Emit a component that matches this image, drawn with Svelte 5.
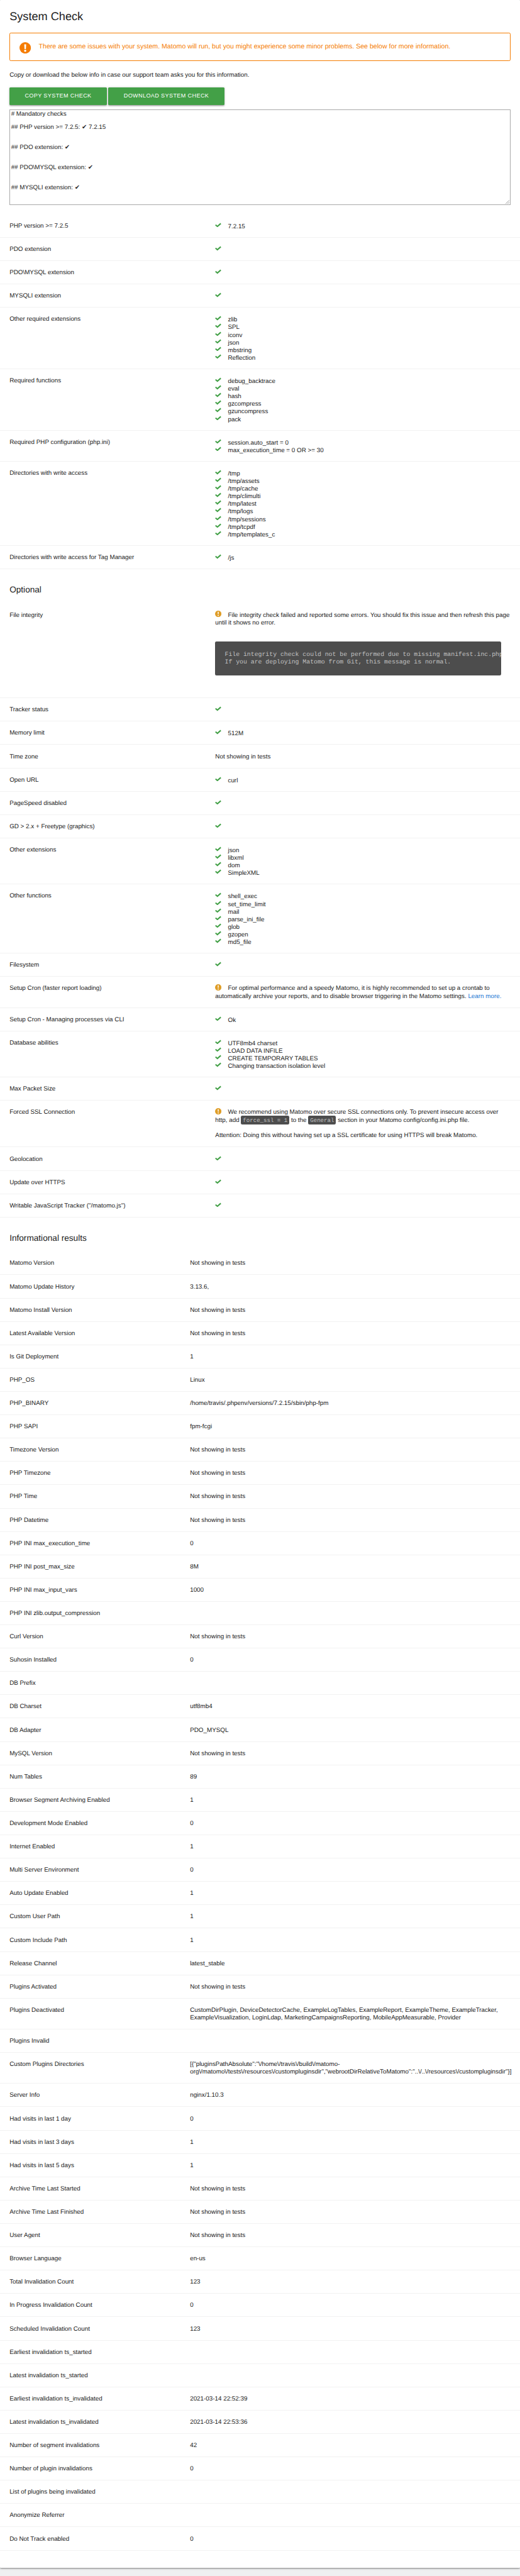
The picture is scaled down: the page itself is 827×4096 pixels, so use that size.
<script>
  const NS = 'Not showing in tests';
  const mandatory = [
    ['PHP version >= 7.2.5', ['7.2.15']],
    ['PDO extension', ['']],
    ['PDO\\MYSQL extension', ['']],
    ['MYSQLI extension', ['']],
    ['Other required extensions', ['zlib', 'SPL', 'iconv', 'json', 'mbstring', 'Reflection']],
    ['Required functions', ['debug_backtrace', 'eval', 'hash', 'gzcompress', 'gzuncompress', 'pack']],
    ['Required PHP configuration (php.ini)', ['session.auto_start = 0', 'max_execution_time = 0 OR >= 30']],
    ['Directories with write access', ['/tmp', '/tmp/assets', '/tmp/cache', '/tmp/climulti', '/tmp/latest', '/tmp/logs', '/tmp/sessions', '/tmp/tcpdf', '/tmp/templates_c']],
    ['Directories with write access for Tag Manager', ['/js']],
  ];
  const optional = [
    ['File integrity', 'integrity', 199],
    ['Tracker status', ['']],
    ['Memory limit', ['512M']],
    ['Time zone', 'plain', 49],
    ['Open URL', ['curl']],
    ['PageSpeed disabled', ['']],
    ['GD > 2.x + Freetype (graphics)', ['']],
    ['Other extensions', ['json', 'libxml', 'dom', 'SimpleXML']],
    ['Other functions', ['shell_exec', 'set_time_limit', 'mail', 'parse_ini_file', 'glob', 'gzopen', 'md5_file']],
    ['Filesystem', ['']],
    ['Setup Cron (faster report loading)', 'cron', 65],
    ['Setup Cron - Managing processes via CLI', ['Ok']],
    ['Database abilities', ['UTF8mb4 charset', 'LOAD DATA INFILE', 'CREATE TEMPORARY TABLES', 'Changing transaction isolation level']],
    ['Max Packet Size', ['']],
    ['Forced SSL Connection', 'ssl', 98],
    ['Geolocation', ['']],
    ['Update over HTTPS', ['']],
    ['Writable JavaScript Tracker ("/matomo.js")', ['']],
  ];
  const info = [
    ['Matomo Version', NS],
    ['Matomo Update History', '3.13.6,'],
    ['Matomo Install Version', NS],
    ['Latest Available Version', NS],
    ['Is Git Deployment', '1'],
    ['PHP_OS', 'Linux'],
    ['PHP_BINARY', '/home/travis/.phpenv/versions/7.2.15/sbin/php-fpm'],
    ['PHP SAPI', 'fpm-fcgi'],
    ['Timezone Version', NS],
    ['PHP Timezone', NS],
    ['PHP Time', NS],
    ['PHP Datetime', NS],
    ['PHP INI max_execution_time', '0'],
    ['PHP INI post_max_size', '8M'],
    ['PHP INI max_input_vars', '1000'],
    ['PHP INI zlib.output_compression', ''],
    ['Curl Version', NS],
    ['Suhosin Installed', '0'],
    ['DB Prefix', ''],
    ['DB Charset', 'utf8mb4'],
    ['DB Adapter', 'PDO_MYSQL'],
    ['MySQL Version', NS],
    ['Num Tables', '89'],
    ['Browser Segment Archiving Enabled', '1'],
    ['Development Mode Enabled', '0'],
    ['Internet Enabled', '1'],
    ['Multi Server Environment', '0'],
    ['Auto Update Enabled', '1'],
    ['Custom User Path', '1'],
    ['Custom Include Path', '1'],
    ['Release Channel', 'latest_stable'],
    ['Plugins Activated', NS],
    ['Plugins Deactivated', 'CustomDirPlugin, DeviceDetectorCache, ExampleLogTables, ExampleReport, ExampleTheme, ExampleTracker,\nExampleVisualization, LoginLdap, MarketingCampaignsReporting, MobileAppMeasurable, Provider'],
    ['Plugins Invalid', ''],
    ['Custom Plugins Directories', '[{"pluginsPathAbsolute":"\\/home\\/travis\\/build\\/matomo-\norg\\/matomo\\/tests\\/resources\\/custompluginsdir","webrootDirRelativeToMatomo":"..\\/..\\/resources\\/custompluginsdir"}]'],
    ['Server Info', 'nginx/1.10.3'],
    ['Had visits in last 1 day', '0'],
    ['Had visits in last 3 days', '1'],
    ['Had visits in last 5 days', '1'],
    ['Archive Time Last Started', NS],
    ['Archive Time Last Finished', NS],
    ['User Agent', NS],
    ['Browser Language', 'en-us'],
    ['Total Invalidation Count', '123'],
    ['In Progress Invalidation Count', '0'],
    ['Scheduled Invalidation Count', '123'],
    ['Earliest invalidation ts_started', ''],
    ['Latest invalidation ts_started', ''],
    ['Earliest invalidation ts_invalidated', '2021-03-14 22:52:39'],
    ['Latest invalidation ts_invalidated', '2021-03-14 22:53:36'],
    ['Number of segment invalidations', '42'],
    ['Number of plugin invalidations', '0'],
    ['List of plugins being invalidated', ''],
    ['Anonymize Referrer', ''],
    ['Do Not Track enabled', '0'],
  ];
  const report = '# Mandatory checks\n\n## PHP version >= 7.2.5: ✔ 7.2.15\n\n\n## PDO extension: ✔\n\n\n## PDO\\MYSQL extension: ✔\n\n\n## MYSQLI extension: ✔';
</script>

{#snippet ok()}
  <svg class="icon" viewBox="0 0 13 10"><path d="M1 4.7 L4.9 8 L12.1 1.8" fill="none" stroke="#43a047" stroke-width="2.7" /></svg>
{/snippet}

{#snippet warn()}
  <svg class="icon warn" viewBox="0 0 14 14"><circle cx="7" cy="7" r="7" fill="#df9d27" /><path d="M5.9 2.4h2.2l-.2 5.6H6.1z" fill="#fff" /><circle cx="7" cy="10.6" r="1.3" fill="#fff" /></svg>
{/snippet}

{#snippet checks(rows)}
  <div class="table">
    {#each rows as [label, value, height]}
      <div class="row" style:height="{height ?? 33 + 16 * value.length}px">
        <div class="label">{label}</div>
        <div class="value">
          {#if value === 'plain'}
            {NS}
          {:else if value === 'integrity'}
            {@render warn()}<span>File integrity check failed and reported some errors. You should fix this issue and then refresh this page<br />until it shows no error.</span>
            <pre>File integrity check could not be performed due to missing manifest.inc.php.
If you are deploying Matomo from Git, this message is normal.</pre>
          {:else if value === 'cron'}
            {@render warn()}<span>For optimal performance and a speedy Matomo, it is highly recommended to set up a crontab to<br />automatically archive your reports, and to disable browser triggering in the Matomo settings. <a href="#learn">Learn more.</a></span>
          {:else if value === 'ssl'}
            {@render warn()}<span>We recommend using Matomo over secure SSL connections only. To prevent insecure access over<br />http, add <code>force_ssl = 1</code> to the <code>General</code> section in your Matomo config/config.ini.php file.</span>
            <p class="attention">Attention: Doing this without having set up a SSL certificate for using HTTPS will break Matomo.</p>
          {:else}
            {#each value as item}
              <div class="item">{@render ok()}<span>{item}</span></div>
            {/each}
          {/if}
        </div>
      </div>
    {/each}
  </div>
{/snippet}

<div class="page">
  <main class="card">
    <h2>System Check</h2>
    <div class="alert">
      <svg viewBox="0 0 24 24"><circle cx="12" cy="12" r="12" fill="#f57c00" /><path d="M10 4.5h4l-.5 10h-3z" fill="#fff" /><circle cx="12" cy="18.2" r="2.3" fill="#fff" /></svg>
      <span>There are some issues with your system. Matomo will run, but you might experience some minor problems. See below for more information.</span>
    </div>
    <p class="hint">Copy or download the below info in case our support team asks you for this information.</p>
    <div class="buttons">
      <button>COPY SYSTEM CHECK</button>
      <button>DOWNLOAD SYSTEM CHECK</button>
    </div>
    <div class="report">{report}
      <svg viewBox="0 0 10 10"><path d="M1.5 9.5 L9 2 M5.5 9.5 L9 6" stroke="#777" fill="none" /></svg>
    </div>
    {@render checks(mandatory)}
    <h3>Optional</h3>
    {@render checks(optional)}
    <h3>Informational results</h3>
    <div class="table info">
      {#each info as [label, value]}
        <div class="row" style:height="{value.includes('\n') ? 65 : 49}px">
          <div class="label">{label}</div>
          <div class="value">{value}</div>
        </div>
      {/each}
    </div>
  </main>
</div>

<style>
  :global(body) {
    margin: 0;
    background: #eff0f1;
  }
  .page {
    width: 1092px;
    height: 5407px;
    zoom: 0.75742;
    overflow: hidden;
    font: 13px/16px 'Liberation Sans', Arial, sans-serif;
    color: #212121;
    text-rendering: geometricPrecision;
  }
  .page * {
    box-sizing: border-box;
  }
  .card {
    height: 5391px;
    background: #fff;
    border-radius: 2px;
    box-shadow: 0 2px 2px 0 rgba(0, 0, 0, 0.14), 0 3px 1px -2px rgba(0, 0, 0, 0.12), 0 1px 5px 0 rgba(0, 0, 0, 0.2);
  }
  h2 {
    margin: 0 20px;
    padding-top: 20px;
    height: 68px;
    font-size: 24px;
    line-height: 30px;
    font-weight: 400;
  }
  h3 {
    margin: 0 20px;
    padding-top: 32px;
    height: 72px;
    font-size: 18px;
    line-height: 24px;
    font-weight: 400;
  }
  .alert {
    margin: 0 20px;
    height: 60px;
    padding-left: 20px;
    display: flex;
    align-items: center;
    gap: 16px;
    border: 1px solid #f57c00;
    border-radius: 3px;
    color: #f57c00;
    font-size: 14px;
    white-space: nowrap;
  }
  .alert svg {
    width: 24px;
    height: 24px;
    margin-top: 5px;
  }
  .hint {
    margin: 0 20px;
    padding-top: 22.3px;
    height: 56px;
  }
  .buttons {
    margin: 0 20px;
    height: 46px;
    display: flex;
    gap: 3.6px;
  }
  button {
    height: 36px;
    padding: 0 32px;
    border: 0;
    border-radius: 2px;
    background: #43a047;
    color: #fff;
    font: 12px/36px 'Liberation Sans', Arial, sans-serif;
    letter-spacing: 0.5px;
    white-space: nowrap;
    box-shadow: 0 2px 2px 0 rgba(0, 0, 0, 0.14), 0 3px 1px -2px rgba(0, 0, 0, 0.12), 0 1px 5px 0 rgba(0, 0, 0, 0.2);
  }
  .report {
    position: relative;
    margin: 0 20px 20px;
    height: 200px;
    padding: 2.6px 2px;
    border: 1px solid #a9a9a9;
    line-height: 14px;
    white-space: pre;
    overflow: hidden;
  }
  .report svg {
    position: absolute;
    right: 0;
    bottom: 0;
    width: 10px;
    height: 10px;
  }
  .row {
    display: grid;
    grid-template-columns: 432px 1fr;
    padding: 17.3px 20px 0;
    border-bottom: 1px solid #f2f2f2;
    white-space: nowrap;
  }
  .info .row {
    grid-template-columns: 379px 1fr;
  }
  .info .value {
    white-space: pre;
  }
  .item {
    height: 16px;
  }
  .icon {
    display: inline-block;
    width: 13px;
    height: 10px;
    margin-right: 13.6px;
    vertical-align: 1.3px;
  }
  .icon.warn {
    width: 13.4px;
    height: 13.4px;
    margin-right: 13.2px;
    margin-top: -2px;
    vertical-align: -0.5px;
  }
  pre {
    margin: 29.7px 0 0;
    width: 600px;
    height: 72px;
    padding: 20.5px 20px;
    border-radius: 3px;
    background: #4d4d4d;
    color: #c0c0c0;
    font: 13px/16px 'Liberation Mono', monospace;
    overflow: hidden;
  }
  code {
    padding: 2px 4px;
    border-radius: 3px;
    background: #4d4d4d;
    color: #c0c0c0;
    font: 12px/14px 'Liberation Mono', monospace;
  }
  a {
    color: #1976d2;
    text-decoration: none;
  }
  .attention {
    margin: 16px 0 0;
  }
</style>
